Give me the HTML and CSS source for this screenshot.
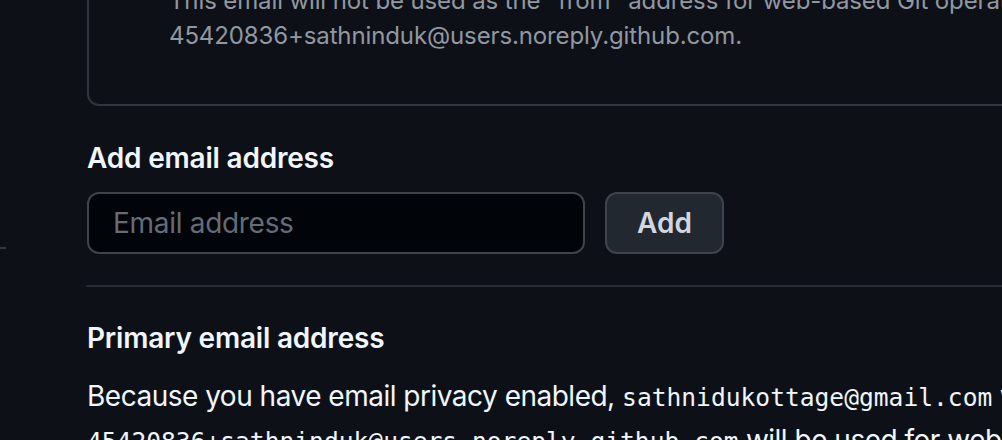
FILE: index.html
```html
<!DOCTYPE html>
<html>
<head>
<meta charset="utf-8">
<link rel="stylesheet" href="styles.css">
</head>
<body>
<div class="page">
  <div class="gutter"><div class="gutter-mark"></div></div>
  <main class="main">
    <div class="notice">
      <p class="notice-text"><span class="nowrap">This email will not be used as the "from" address for web-based Git operations, e.g. edits and merges. We will instead use</span><br>45420836+sathninduk@users.noreply.github.com.</p>
    </div>
    <h3 class="heading heading-add">Add email address</h3>
    <form class="add-row">
      <input class="email-input" type="email" placeholder="Email address">
      <button class="btn" type="button">Add</button>
    </form>
    <hr class="divider">
    <h3 class="heading heading-primary">Primary email address</h3>
    <p class="body-text"><span class="nowrap">Because you have email privacy enabled, <code class="mono">sathnidukottage@gmail.com</code> will be removed from commits.</span><br><code class="mono">45420836+sathninduk@users.noreply.github.com</code> will be used for web-based Git operations.</p>
  </main>
</div>
</body>
</html>
```

FILE: styles.css
```css
html, body {
  margin: 0;
  padding: 0;
  background: #0d1117;
  overflow: hidden;
  width: 1002px;
  height: 440px;
}
body {
  font-family: Inter, "Noto Sans", sans-serif;
  color: #f0f6fc;
}
.page {
  display: flex;
  width: 1002px;
  height: 440px;
  overflow: hidden;
}
.gutter {
  flex: 0 0 87px;
}
.gutter-mark {
  margin-top: 247px;
  width: 6px;
  height: 2px;
  background: #30363d;
}
.main {
  flex: 0 0 auto;
  width: 1100px;
}
.notice {
  margin-top: -60px;
  border: 2px solid #30363d;
  border-radius: 12px;
  padding: 41px 30px 51px 80px;
}
.notice-text {
  margin: 0;
  font-size: 24px;
  line-height: 35px;
  letter-spacing: -0.12px;
  color: #9198a1;
}
.nowrap {
  white-space: nowrap;
}
.heading {
  margin: 0;
  font-size: 28px;
  line-height: 42px;
  font-weight: 600;
  letter-spacing: -0.2px;
  color: #f0f6fc;
}
.heading-add {
  margin-top: 31px;
}
.add-row {
  display: flex;
  gap: 20px;
  margin: 13px 0 0 0;
}
.email-input {
  box-sizing: border-box;
  width: 498px;
  height: 62px;
  background: #010409;
  border: 2px solid #3d444d;
  border-radius: 12px;
  padding: 0 24px;
  font-family: Inter, "Noto Sans", sans-serif;
  font-size: 28px;
  letter-spacing: -0.3px;
  color: #f0f6fc;
  outline: none;
}
.email-input::placeholder {
  color: #656c76;
}
.btn {
  box-sizing: border-box;
  width: 119px;
  height: 62px;
  background: #212830;
  border: 2px solid #3d444d;
  border-radius: 12px;
  font-family: Inter, "Noto Sans", sans-serif;
  font-size: 28px;
  font-weight: 600;
  color: #d1d7e0;
  padding: 0;
}
.divider {
  margin: 31px 0 0 -1px;
  border: 0;
  height: 2px;
  background: #262c36;
}
.heading-primary {
  margin-top: 30px;
}
.body-text {
  margin: 16px 0 0 0;
  font-size: 28px;
  line-height: 42px;
  letter-spacing: -0.5px;
  color: #f0f6fc;
}
.mono {
  font-family: "DejaVu Sans Mono", "Liberation Mono", monospace;
  font-size: 24.6px;
  letter-spacing: 0;
}
```
